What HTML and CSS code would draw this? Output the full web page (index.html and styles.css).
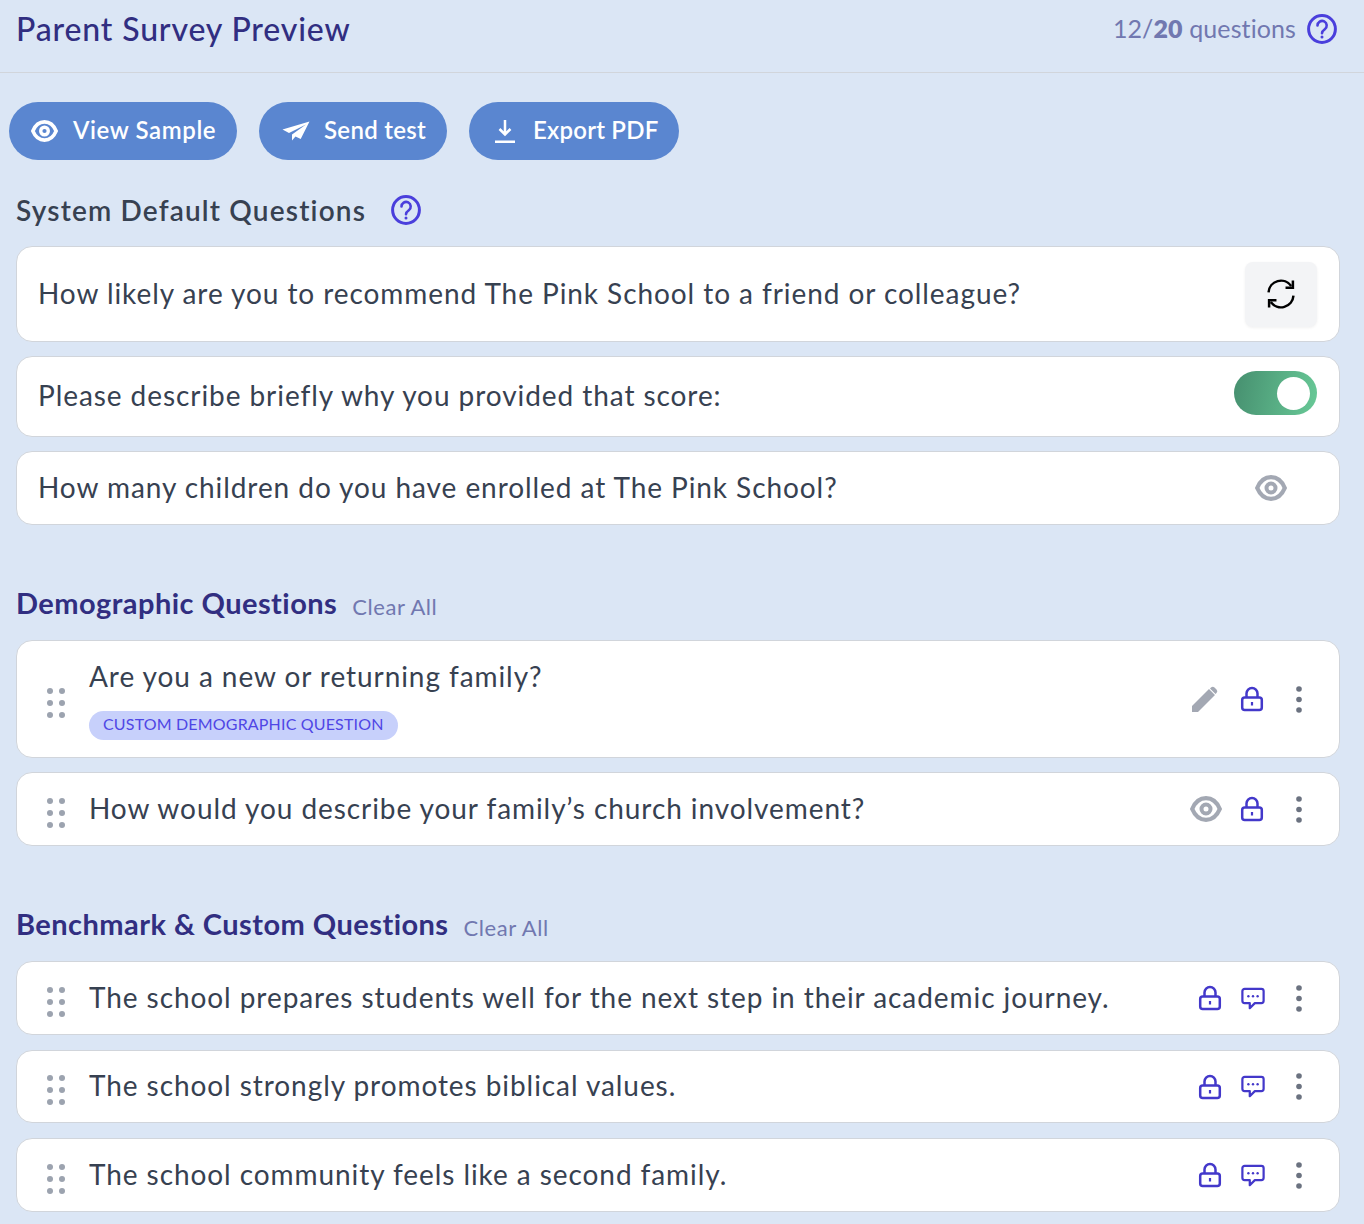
FILE: index.html
```html
<!DOCTYPE html>
<html lang="en">
<head>
<meta charset="utf-8">
<title>Parent Survey Preview</title>
<link rel="stylesheet" href="styles.css">
</head>
<body>
<svg class="defs" width="0" height="0" aria-hidden="true">
  <defs>
    <symbol id="eye" viewBox="0 0 32 26"><path d="M16 2.200C9.500 2.200 4.700 7 2.200 13c2.500 6 7.300 10.800 13.800 10.800S27.300 19 29.800 13C27.300 7 22.500 2.200 16 2.200z" fill="none" stroke="currentColor" stroke-width="4.200"/><circle cx="16" cy="13" r="4.500" fill="none" stroke="currentColor" stroke-width="4"/></symbol>
    <symbol id="lock" viewBox="0 0 24 26"><path d="M6.500 11.500V7.500a5.500 5.500 0 0 1 11 0v4" fill="none" stroke="currentColor" stroke-width="2.500"/><rect x="2.200" y="11.500" width="19.600" height="12.500" rx="2.500" fill="none" stroke="currentColor" stroke-width="2.500"/><path d="M12 16v3.500" stroke="currentColor" stroke-width="2.200"/></symbol>
    <symbol id="chat" viewBox="0 0 26 24"><path d="M4 1.500h18a2.500 2.500 0 0 1 2.500 2.500v10.500A2.500 2.500 0 0 1 22 17h-7l-5.500 5.500V17H4a2.500 2.500 0 0 1-2.500-2.500V4A2.500 2.500 0 0 1 4 1.500z" fill="none" stroke="currentColor" stroke-width="2.400" stroke-linejoin="round"/><circle cx="8" cy="9.500" r="1.300" fill="currentColor"/><circle cx="13" cy="9.500" r="1.300" fill="currentColor"/><circle cx="18" cy="9.500" r="1.300" fill="currentColor"/></symbol>
    <symbol id="help" viewBox="0 0 30 30"><circle cx="15" cy="15" r="13.400" fill="none" stroke="currentColor" stroke-width="3"/><path d="M10.500 11.500a4.600 4.600 0 1 1 7.300 3.700c-1.700 1.200-2.800 2-2.800 4" fill="none" stroke="currentColor" stroke-width="2.600" stroke-linecap="round"/><circle cx="15" cy="23" r="1.500" fill="currentColor"/></symbol>
    <symbol id="grip" viewBox="0 0 20 30"><g fill="currentColor"><circle cx="3" cy="3" r="3"/><circle cx="15" cy="3" r="3"/><circle cx="3" cy="15" r="3"/><circle cx="15" cy="15" r="3"/><circle cx="3" cy="27" r="3"/><circle cx="15" cy="27" r="3"/></g></symbol>
    <symbol id="dots" viewBox="0 0 6 27"><g fill="currentColor"><circle cx="3" cy="3" r="2.800"/><circle cx="3" cy="13.500" r="2.800"/><circle cx="3" cy="24" r="2.800"/></g></symbol>
  </defs>
</svg>

<header class="topbar">
  <h1 class="title">Parent Survey Preview</h1>
  <div class="count">
    <span class="count-text">12/<b>20</b> questions</span>
    <svg class="icon-help"><use href="#help"/></svg>
  </div>
</header>

<main class="content">
  <div class="actions">
    <button class="btn btn-view"><svg class="btn-eye"><use href="#eye"/></svg>View Sample</button>
    <button class="btn btn-send"><svg class="btn-plane" viewBox="0 0 28 20"><path d="M27.500 .5 .5 8.500l6.500 3.500L24 3.500 10 13.500V19.500l3.500-4 5.200 2.500z" fill="currentColor"/></svg>Send test</button>
    <button class="btn btn-export"><svg class="btn-dl" viewBox="0 0 20 24"><path d="M10 1v14.500M4.500 10 10 15.500 15.500 10M0 22.700h20" fill="none" stroke="currentColor" stroke-width="2.500"/></svg>Export PDF</button>
  </div>

  <div class="sys-head">
    <h2 class="h-sys">System Default Questions</h2>
    <svg class="icon-help"><use href="#help"/></svg>
  </div>

  <div class="list">
    <div class="card card-a"><p class="q">How likely are you to recommend The Pink School to a friend or colleague?</p>
      <span class="refresh"><svg viewBox="0 0 30 30" class="refresh-i"><path d="M4 13.500A11 11 0 0 1 24 8M26 16.500A11 11 0 0 1 6 22" fill="none" stroke="currentColor" stroke-width="2.200"/><path d="M25.500 3v6.500H19M4.500 27v-6.500H11" fill="none" stroke="currentColor" stroke-width="2.200"/></svg></span></div>
    <div class="card card-b"><p class="q">Please describe briefly why you provided that score:</p>
      <span class="toggle"><span class="knob"></span></span></div>
    <div class="card card-c"><p class="q">How many children do you have enrolled at The Pink School?</p>
      <svg class="i-eye i-eye-sys"><use href="#eye"/></svg></div>
  </div>

  <div class="sec-head sec-demo">
    <h2 class="h-sec">Demographic Questions</h2><a class="clear">Clear All</a>
  </div>
  <div class="list">
    <div class="card card-tall">
      <svg class="grip"><use href="#grip"/></svg>
      <div class="q-wrap"><p class="q">Are you a new or returning family?</p><span class="tag">CUSTOM DEMOGRAPHIC QUESTION</span></div>
      <div class="tools">
        <svg class="i-pen" viewBox="0 0 28 28"><path d="M1 27v-6L18 4l6 6L7 27zM20 2.500a2.500 2.500 0 0 1 3.500 0l2 2a2.500 2.500 0 0 1 0 3.500l-1 1-5.500-5.500z" fill="currentColor"/></svg>
        <svg class="i-lock"><use href="#lock"/></svg>
        <svg class="i-dots"><use href="#dots"/></svg>
      </div>
    </div>
    <div class="card card-c">
      <svg class="grip"><use href="#grip"/></svg>
      <p class="q">How would you describe your family’s church involvement?</p>
      <div class="tools">
        <svg class="i-eye"><use href="#eye"/></svg>
        <svg class="i-lock"><use href="#lock"/></svg>
        <svg class="i-dots"><use href="#dots"/></svg>
      </div>
    </div>
  </div>

  <div class="sec-head sec-bench">
    <h2 class="h-sec">Benchmark &amp; Custom Questions</h2><a class="clear">Clear All</a>
  </div>
  <div class="list list-bench">
    <div class="card card-c">
      <svg class="grip"><use href="#grip"/></svg>
      <p class="q">The school prepares students well for the next step in their academic journey.</p>
      <div class="tools tools-b"><svg class="i-lock"><use href="#lock"/></svg><svg class="i-chat"><use href="#chat"/></svg><svg class="i-dots"><use href="#dots"/></svg></div>
    </div>
    <div class="card card-m">
      <svg class="grip"><use href="#grip"/></svg>
      <p class="q">The school strongly promotes biblical values.</p>
      <div class="tools tools-b"><svg class="i-lock"><use href="#lock"/></svg><svg class="i-chat"><use href="#chat"/></svg><svg class="i-dots"><use href="#dots"/></svg></div>
    </div>
    <div class="card card-c">
      <svg class="grip"><use href="#grip"/></svg>
      <p class="q">The school community feels like a second family.</p>
      <div class="tools tools-b"><svg class="i-lock"><use href="#lock"/></svg><svg class="i-chat"><use href="#chat"/></svg><svg class="i-dots"><use href="#dots"/></svg></div>
    </div>
  </div>
</main>
</body>
</html>
```
FILE: styles.css
```css
* { box-sizing: border-box; }
html, body { margin: 0; padding: 0; }
body {
  width: 1364px;
  height: 1224px;
  overflow: hidden;
  background: #dbe6f5;
  font-family: "Lato", "Noto Sans", sans-serif;
  font-variant-ligatures: none;
  color: #374151;
}
.defs { position: absolute; }
.topbar {
  height: 73px;
  display: flex;
  align-items: center;
  justify-content: space-between;
  padding: 0 27px 14px 16px;
  border-bottom: 1px solid #d1d5db;
}
.title { margin: 0; padding-bottom: 2px; font-size: 32px; font-weight: 500; letter-spacing: .85px; color: #312e81; }
.count { display: flex; align-items: center; gap: 11px; font-size: 25px; color: #7178b0; }
.count-text { padding-bottom: 2px; letter-spacing: .1px; }
.count b { font-weight: 800; }
.icon-help { width: 30px; height: 30px; color: #4a3fdc; flex: none; }

.content { padding: 29px 24px 0 16px; }
.actions { display: flex; gap: 22px; margin-left: -7px; }
.btn {
  height: 58px;
  border: 0;
  border-radius: 29px;
  background: #5a86d0;
  color: #fff;
  font: 600 24px "Lato", "Noto Sans", sans-serif;
  letter-spacing: .4px;
  display: flex;
  align-items: center;
  padding: 0 0 3px;
}
.btn svg { margin-top: 3px; }
.btn-view { width: 228px; padding-left: 22px; gap: 15px; letter-spacing: .6px; }
.btn-send { width: 188px; padding-left: 23px; gap: 14px; letter-spacing: .3px; }
.btn-export { width: 210px; padding-left: 26px; gap: 18px; letter-spacing: .2px; }
.btn-eye { width: 27px; height: 22px; }
.btn-plane { width: 28px; height: 20px; }
.btn-dl { width: 20px; height: 24px; }

.sys-head { display: flex; align-items: center; gap: 25px; height: 40px; margin-top: 30px; }
.h-sys { margin: 0; padding-bottom: 1px; font-size: 28px; font-weight: 600; letter-spacing: 1.17px; color: #374151; }

.list { display: flex; flex-direction: column; gap: 14px; margin-top: 16px; }
.list-bench { gap: 15px; }
.card {
  width: 1324px;
  background: #fff;
  border: 1px solid #d1d5db;
  border-radius: 16px;
  display: flex;
  align-items: center;
  padding: 0 22px 0 21px;
}
.card-a { height: 96px; }
.card-b { height: 81px; }
.card-c { height: 74px; }
.card-m { height: 73px; }
.card-tall { height: 118px; }
.q { margin: 0; padding-bottom: 3px; flex: 1; font-size: 28px; letter-spacing: .93px; color: #374151; white-space: nowrap; }
.q-wrap { flex: 1; display: flex; flex-direction: column; align-items: flex-start; gap: 18px; }
.q-wrap .q { flex: none; padding-bottom: 0; }
.refresh {
  width: 72px; height: 65px; background: #f3f4f6; border-radius: 8px;
  box-shadow: 0 1px 3px rgba(0,0,0,.06);
  display: flex; align-items: center; justify-content: center; color: #000;
}
.refresh-i { width: 34px; height: 34px; }
.toggle {
  width: 83px; height: 44px; border-radius: 22px; margin-bottom: 7px;
  background: linear-gradient(100deg, #468f6f, #68c997);
  display: flex; align-items: center; justify-content: flex-end; padding-right: 7px;
}
.knob { width: 33px; height: 33px; border-radius: 50%; background: #fff; }
.i-eye { width: 32px; height: 26px; color: #a3a8b3; }
.i-eye-sys { margin-right: 30px; }

.sec-head { height: 40px; padding-top: 1px; }
.sec-demo { margin-top: 59px; }
.sec-bench { margin-top: 59px; }
.h-sec { display: inline; margin: 0; font-size: 29px; font-weight: 700; letter-spacing: .45px; color: #312e81; }
.clear { margin-left: 15px; font-size: 22px; letter-spacing: .55px; vertical-align: -1px; color: #7178b0; }

.grip { width: 20px; height: 30px; color: #9ca3af; margin: 7px 22px 0 9px; flex: none; }
.tag {
  height: 29px; border-radius: 15px; background: #c7d0fb; color: #4f46e5;
  font-size: 16px; letter-spacing: .17px; padding: 0 14px 3px; display: flex; align-items: center;
}
.tools { display: flex; align-items: center; gap: 18px; padding-right: 15px; }
.tools-b { gap: 19px; }
.i-pen { width: 28px; height: 28px; margin-right: 3px; color: #a3a8b3; }
.i-lock { width: 24px; height: 26px; color: #4338ca; flex: none; }
.i-chat { width: 24px; height: 23px; color: #4338ca; flex: none; }
.i-dots { width: 6px; height: 27px; color: #6b7280; margin-left: 14px; flex: none; }
.tools-b .i-dots { margin-left: 12.5px; }
```
